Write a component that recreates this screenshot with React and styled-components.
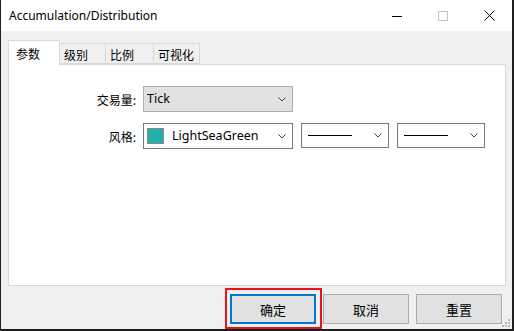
import React from "react";
import styled, { createGlobalStyle } from "styled-components";

const Global = createGlobalStyle`
  html, body { margin: 0; padding: 0; background: #1e1e1e; }
  body { font-family: "Noto Sans", "Noto Sans CJK SC", sans-serif; }
  * { box-sizing: border-box; }
`;

const Window = styled.div`
  position: relative;
  margin-left: 1px;
  width: 511px;
  height: 329px;
  background: #f0f0f0;
  display: flex;
  flex-direction: column;
`;

const TitleBar = styled.div`
  height: 31px;
  background: #ffffff;
  display: flex;
  align-items: center;
  padding-left: 8px;
`;

const Title = styled.div`
  flex: 1;
  font-family: "Noto Sans", "Noto Sans CJK SC", sans-serif;
  font-size: 12px;
  color: #000;
  margin-top: -1px;
`;

const Ctrl = styled.div`
  width: 46px;
  height: 31px;
  display: flex;
  align-items: center;
  justify-content: center;
`;

const Body = styled.div`
  flex: 1;
  display: flex;
  flex-direction: column;
  padding: 9px 6px 0 7px;
`;

const TabRow = styled.div`
  display: flex;
  align-items: flex-end;
  height: 24px;
  position: relative;
  z-index: 1;
`;

const Tab = styled.div`
  height: ${(p) => (p.$active ? "25px" : "21px")};
  width: ${(p) => p.$w}px;
  background: ${(p) => (p.$active ? "#ffffff" : "#f0f0f0")};
  border: 1px solid #d9d9d9;
  border-bottom: ${(p) => (p.$active ? "none" : "1px solid #d9d9d9")};
  border-left: ${(p) => (p.$first || p.$active ? "1px solid #d9d9d9" : "none")};
  margin-bottom: ${(p) => (p.$active ? "-1px" : "0")};
  font-family: "Noto Sans CJK SC", sans-serif;
  font-size: 12px;
  color: #000;
  display: flex;
  align-items: center;
  padding-left: ${(p) => (p.$active ? "7px" : "4px")};
  padding-top: ${(p) => (p.$active ? "0" : "1px")};
`;

const Panel = styled.div`
  height: 222px;
  background: #ffffff;
  border: 1px solid #d9d9d9;
  padding-top: 21px;
  display: grid;
  grid-template-columns: 127px auto;
  grid-auto-rows: min-content;
  column-gap: 7px;
  row-gap: 11px;
  align-content: start;
`;

const Label = styled.div`
  font-family: "Noto Sans CJK SC", sans-serif;
  font-size: 12px;
  color: #000;
  text-align: right;
  align-self: center;
  padding-top: 1px;
`;

const Controls = styled.div`
  display: flex;
  gap: 8px;
`;

const Select = styled.div`
  width: ${(p) => p.$w}px;
  height: ${(p) => p.$h || 26}px;
  background: ${(p) => (p.$grey ? "#e1e1e1" : "#ffffff")};
  border: 1px solid ${(p) => (p.$grey ? "#adadad" : "#7a7a7a")};
  display: flex;
  align-items: center;
  padding: 0 6px 0 3px;
  font-family: "Noto Sans", "Noto Sans CJK SC", sans-serif;
  font-size: 12.5px;
  color: #000;
`;

const SelectText = styled.div`
  flex: 1;
  padding-left: ${(p) => p.$pl || 0}px;
  margin-top: -1px;
`;

const Swatch = styled.div`
  width: 17px;
  height: 16px;
  background: ${(p) => p.$c};
  border: 1px solid #8a8a8a;
  flex: none;
`;

const LineSample = styled.div`
  flex: 1;
  height: 1px;
  background: #000;
  margin: 0 22px 0 3px;
`;

const ButtonRow = styled.div`
  display: flex;
  justify-content: flex-end;
  gap: 7px;
  padding: 8px 4px 0 0;
`;

const Btn = styled.div`
  width: 86px;
  height: 30px;
  background: #e1e1e1;
  border: ${(p) => (p.$primary ? "2px solid #0078d7" : "1px solid #adadad")};
  display: flex;
  align-items: center;
  justify-content: center;
  font-family: "Noto Sans CJK SC", sans-serif;
  font-size: 13px;
  color: #000;
`;

const Highlight = styled.div`
  position: relative;
`;

const HighlightBox = styled.div`
  position: absolute;
  left: -5px;
  top: -6px;
  right: -6px;
  bottom: -5px;
  border: 2px solid #e8121c;
  pointer-events: none;
`;

const Grip = styled.svg`
  position: absolute;
  right: 1px;
  bottom: 1px;
`;

const Chevron = () => (
  <svg width="8" height="5" viewBox="0 0 8 5">
    <path d="M0.5 0.5 L4 4 L7.5 0.5" fill="none" stroke="#444" strokeWidth="1" />
  </svg>
);

export default function App() {
  return (
    <>
      <Global />
      <Window>
        <TitleBar>
          <Title>Accumulation/Distribution</Title>
          <Ctrl>
            <svg width="10" height="10" viewBox="0 0 10 10">
              <path d="M0 5.5 H10" stroke="#000" strokeWidth="1" />
            </svg>
          </Ctrl>
          <Ctrl>
            <svg width="10" height="10" viewBox="0 0 10 10">
              <rect x="0.5" y="0.5" width="9" height="9" fill="none" stroke="#c4c4c4" strokeWidth="1" />
            </svg>
          </Ctrl>
          <Ctrl>
            <svg width="11" height="11" viewBox="0 0 11 11">
              <path d="M0.5 0.5 L10.5 10.5 M10.5 0.5 L0.5 10.5" stroke="#000" strokeWidth="1" />
            </svg>
          </Ctrl>
        </TitleBar>
        <Body>
          <TabRow>
            <Tab $active $first $w={52}>参数</Tab>
            <Tab $w={46}>级别</Tab>
            <Tab $w={48}>比例</Tab>
            <Tab $w={46}>可视化</Tab>
          </TabRow>
          <Panel>
            <Label>交易量:</Label>
            <Controls>
              <Select $w={150} $grey>
                <SelectText>Tick</SelectText>
                <Chevron />
              </Select>
            </Controls>
            <Label>风格:</Label>
            <Controls>
              <Select $w={150} $h={26}>
                <Swatch $c="#20b2aa" />
                <SelectText $pl={8}>LightSeaGreen</SelectText>
                <Chevron />
              </Select>
              <Select $w={88} $h={25}>
                <LineSample />
                <Chevron />
              </Select>
              <Select $w={88} $h={25}>
                <LineSample />
                <Chevron />
              </Select>
            </Controls>
          </Panel>
          <ButtonRow>
            <Highlight>
              <Btn $primary>确定</Btn>
              <HighlightBox />
            </Highlight>
            <Btn>取消</Btn>
            <Btn>重置</Btn>
          </ButtonRow>
        </Body>
        <Grip width="10" height="10" viewBox="0 0 10 10">
          <g fill="#b8b8b8">
            <rect x="7" y="1" width="2" height="2" />
            <rect x="4" y="4" width="2" height="2" />
            <rect x="7" y="4" width="2" height="2" />
            <rect x="1" y="7" width="2" height="2" />
            <rect x="4" y="7" width="2" height="2" />
            <rect x="7" y="7" width="2" height="2" />
          </g>
        </Grip>
      </Window>
    </>
  );
}
